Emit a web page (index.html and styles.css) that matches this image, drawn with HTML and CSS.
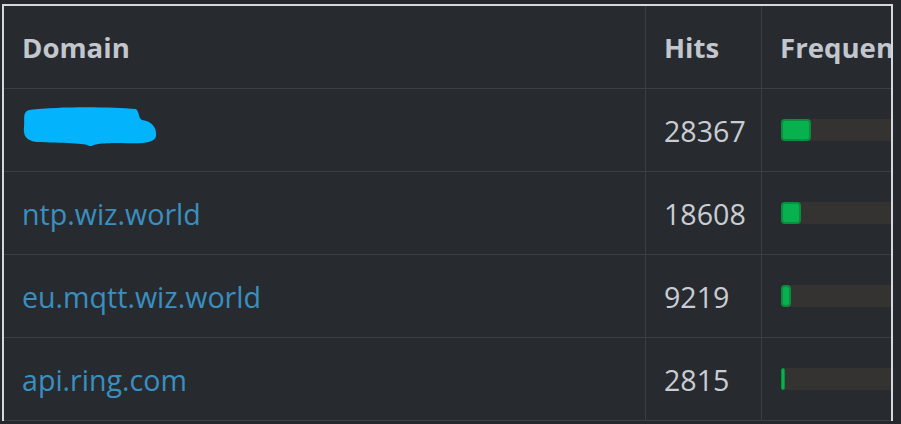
FILE: index.html
```html
<!DOCTYPE html>
<html>
<head>
<meta charset="utf-8">
<link rel="stylesheet" href="styles.css">
</head>
<body>
<div class="box">
  <div class="grid">
    <div class="cell head">Domain</div>
    <div class="cell head">Hits</div>
    <div class="cell head">Frequency</div>

    <div class="cell">
      <svg class="redact" width="140" height="44" viewBox="0 0 140 44">
        <path d="M7 5 C40 1, 90 2, 114 4 C118 8, 116 13, 120 15 C130 16, 135 23, 134 31 C133 38, 120 39, 100 38 C80 38, 72 39, 70 41 L67 41 C65 38, 40 38, 15 37 C4 36, 1 30, 2 22 C3 14, 0 7, 7 5 Z" fill="#03b3fb"/>
      </svg>
    </div>
    <div class="cell num">28367</div>
    <div class="cell"><div class="track"><div class="fill" style="width:30px"></div></div></div>

    <div class="cell"><a class="link" href="#">ntp.wiz.world</a></div>
    <div class="cell num">18608</div>
    <div class="cell"><div class="track"><div class="fill" style="width:20px"></div></div></div>

    <div class="cell"><a class="link" href="#">eu.mqtt.wiz.world</a></div>
    <div class="cell num">9219</div>
    <div class="cell"><div class="track"><div class="fill" style="width:10px"></div></div></div>

    <div class="cell"><a class="link" href="#">api.ring.com</a></div>
    <div class="cell num">2815</div>
    <div class="cell"><div class="track"><div class="fill thin" style="width:4px"></div></div></div>
  </div>
</div>
</body>
</html>
```
FILE: styles.css
```css
html, body {
  margin: 0;
  padding: 0;
  background: #25292e;
}
body {
  font-family: "Open Sans", "Noto Sans", sans-serif;
  font-size: 28.6px;
  overflow: hidden;
}
.box {
  margin: 4px 0 0 2px;
  width: 887px;
  border: 2px solid #d6d8db;
  border-bottom: none;
  overflow: hidden;
  background: #272b30;
}
.grid {
  display: grid;
  grid-template-columns: 642px 116px 450px;
  width: 1208px;
}
.cell {
  box-sizing: border-box;
  height: 83px;
  border-right: 1px solid #3a3f46;
  border-bottom: 1px solid #3a3f46;
  padding: 0 18px;
  display: flex;
  align-items: center;
  white-space: nowrap;
  color: #c8ccd2;
}
.head {
  font-weight: 700;
  font-size: 27.6px;
  color: #c3c7cd;
}
.num {
  color: #c9cdd3;
}
.link {
  color: #3a8fbf;
  text-decoration: none;
}
.redact {
  display: block;
  margin-top: -6px;
}
.track {
  margin-left: 1px;
  width: 420px;
  height: 22px;
  background: #343331;
  border-radius: 3px;
  display: flex;
}
.fill {
  box-sizing: border-box;
  height: 22px;
  background: #06b14e;
  border: 2px solid #0a8d3f;
  border-radius: 4px;
}
.fill.thin {
  border-width: 1px;
  border-radius: 2px;
}
```
